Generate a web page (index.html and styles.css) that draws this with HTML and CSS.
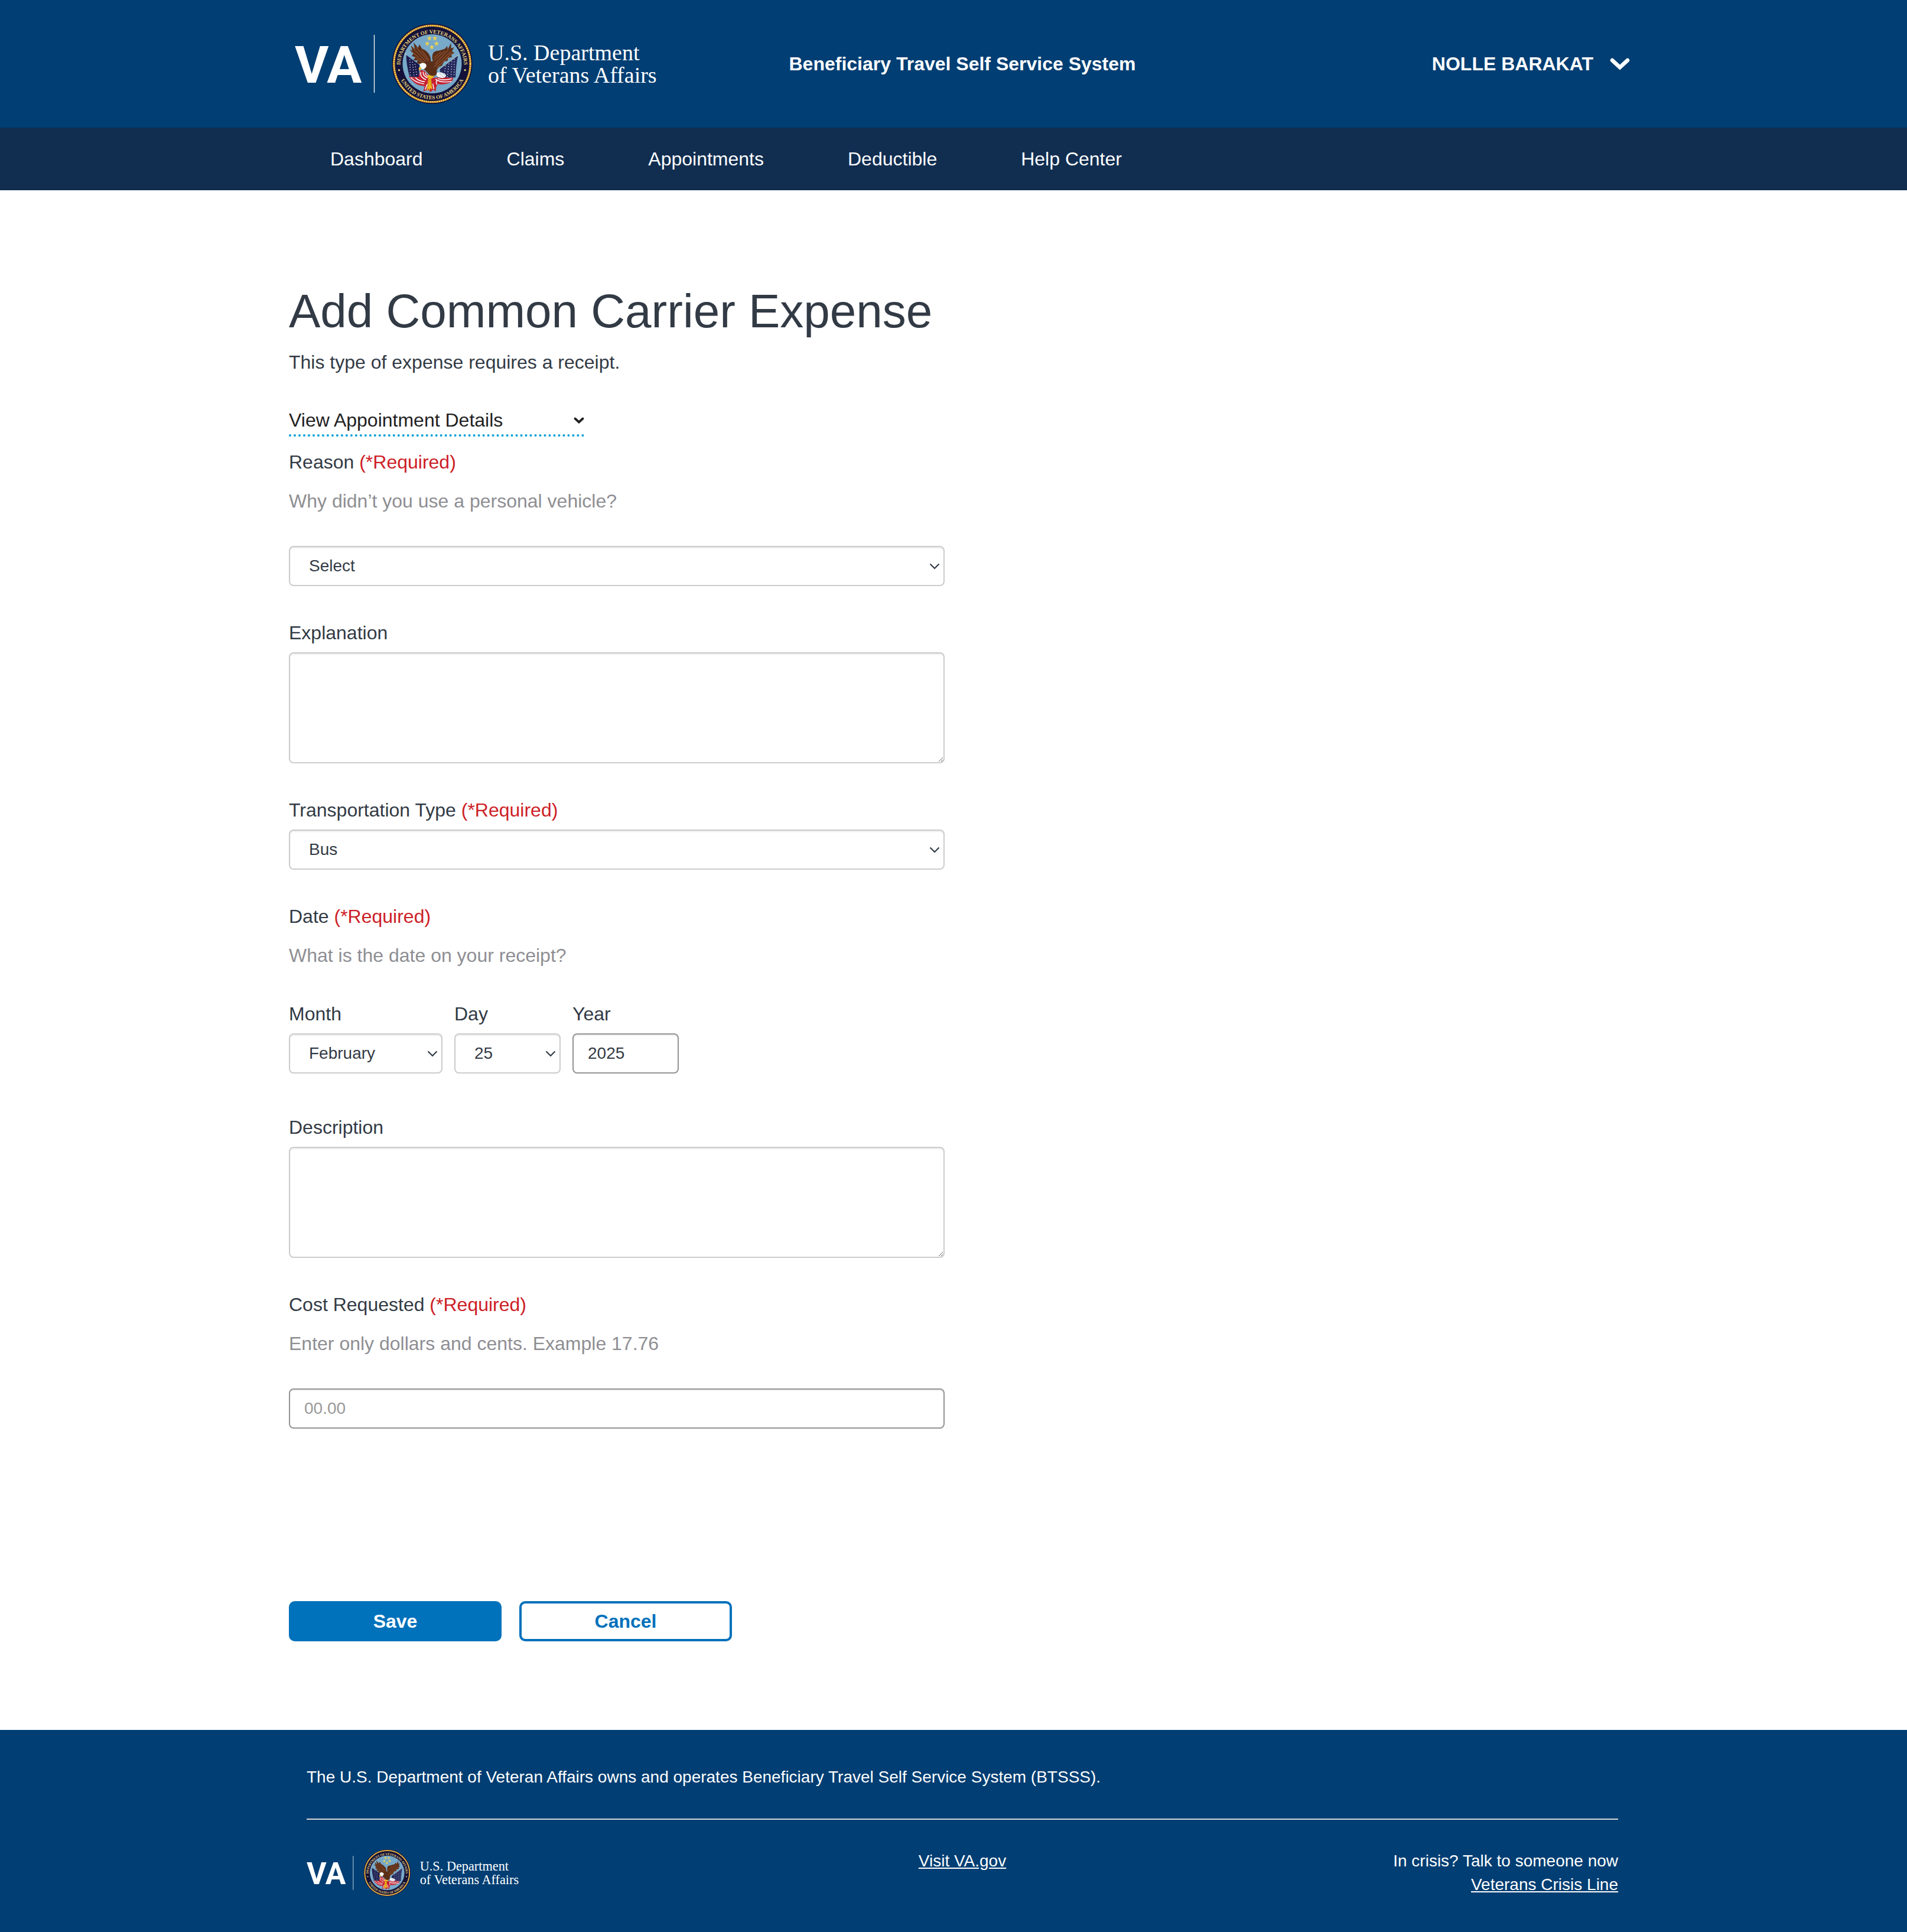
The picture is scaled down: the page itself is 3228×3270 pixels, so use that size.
FILE: index.html
```html
<!DOCTYPE html>
<html lang="en">
<head>
<meta charset="utf-8">
<meta name="viewport" content="width=device-width, initial-scale=1">
<title>Add Common Carrier Expense</title>
<link rel="stylesheet" href="styles.css">
</head>
<body>
<svg class="sprite" aria-hidden="true">
  <symbol id="chevron" viewBox="0 0 18 11"><path d="M1.500 1.500 9 9l7.500-7.500" fill="none" stroke="currentColor" stroke-width="2.200"/></symbol>
  <symbol id="chevron-bold" viewBox="0 0 18 11"><path d="M2.500 2.500 9 8.500l6.500-6" fill="none" stroke="currentColor" stroke-width="3.800" stroke-linecap="round"/></symbol>
  <defs>
    <path id="arc-top" d="M83 243a162 162 0 0 1 324 0"/>
    <path id="arc-bottom" d="M69 264a178 178 0 0 0 352 0"/>
    <path id="star" d="m231 92 3 9h10l-8 6 3 10-8-6-8 6 3-10-8-6h10z"/>
    <g id="seal">
      <circle cx="245" cy="235" r="204" fill="#14123a"/>
      <circle cx="245" cy="235" r="194" fill="none" stroke="#b3782a" stroke-width="10"/>
      <circle cx="245" cy="235" r="194" fill="none" stroke="#f6cf55" stroke-width="8" stroke-dasharray="7 4"/>
      <circle cx="245" cy="235" r="150" fill="#78a9c9"/>
      <g fill="#e6d27c"><circle cx="77" cy="267" r="5"/><circle cx="412" cy="267" r="5"/></g>
      <g fill="#f0d24a">
        <use href="#star"/><use href="#star" x="28"/><use href="#star" x="-11" y="27"/><use href="#star" x="36" y="27"/><use href="#star" x="12" y="45"/>
      </g>
      <path d="M109 182 152 300M379 190 275 268" stroke="#d9dcc0" stroke-width="3"/>
      <path d="M113 190 181 240 177 302 130 300Q114 240 113 190Z" fill="#1b1c4e"/>
      <path d="M376 194Q366 240 364 304L290 308 284 262Z" fill="#24285c"/>
      <path d="M132 212l2 90M145 225l8 74M158 236l9 60M345 222l-4 80M330 234l-8 70M313 244l-8 60M358 210l-2 90" stroke="#e8ecf5" stroke-width="4" stroke-dasharray="4 9"/>
      <path d="M126 299Q150 306 177 300L185 268Q205 262 222 290L246 306Q300 302 352 306L346 325Q310 345 275 338Q262 350 264 376L250 366 238 378 222 366 200 376 207 348Q160 350 126 299Z" fill="#c8202f"/>
      <path d="M136 303Q158 330 204 337M160 305Q178 324 208 326M188 276Q180 302 214 316M200 275Q196 296 222 306M212 280Q208 292 228 300M262 312Q285 334 344 324M274 310Q300 322 344 311M220 338 210 366M248 336 254 364M270 314Q262 332 270 340" fill="none" stroke="#f3f0f2" stroke-width="5"/>
      <path d="M129 161 145 169 137 142 157 160 150 126 174 154 180 136 193 158Q216 166 230 188 240 205 238 222L249 222Q240 194 252 178 263 168 279 168L309 159 322 144 324 162 341 129 341 157 356 151 346 171 358 180 343 188 345 201 326 205 323 220 306 222 295 244 278 252 268 267 270 286 251 302 235 296 218 276 194 254 184 236 166 231 172 218 150 217 160 202 141 195 150 184Z" fill="#5b2e18"/>
      <path d="M144 150 214 225M164 151 226 222M190 164 228 216M145 174 205 230M155 198 205 238M328 163 260 235M341 172 255 250M348 178 268 255M310 169 255 218M290 175 253 205M330 198 275 247" stroke="#8d5130" stroke-width="4"/>
      <path d="M181 238Q190 227 207 232 222 240 212 255 200 268 188 258Z" fill="#fff"/>
      <path d="M183 250Q172 256 180 270L192 258Z" fill="#efbf2d"/>
      <path d="M268 281Q290 272 316 291 318 301 300 308 280 306 268 295Z" fill="#f4f4f8"/>
      <path d="M282 280Q288 294 306 305M292 279Q300 288 314 295" fill="none" stroke="#aab5c8" stroke-width="3"/>
      <path d="M216 299l14-8 16 6 10-4-8 14-8 4 6 56-10-10-4 16-6-14-4 15-4-8 8-60z" fill="#efb81f"/>
      <path d="M231 309l-5 44M236 309l5 40" stroke="#a96d18" stroke-width="2"/>
    </g>
  </defs>
</svg>

<header class="site-header">
  <div class="container site-header__row">
    <a class="logo-link" href="#">
      <svg class="logo" viewBox="0 0 614 136" role="img" aria-label="VA, U.S. Department of Veterans Affairs">
        <text class="va-mark" x="0" y="100">VA</text>
        <path d="M134.500 19v98" stroke="#fff" stroke-width="1.300"/>
        <g transform="translate(232.500 68) scale(.3333) translate(-245 -235)">
          <use href="#seal"/>
          <text class="seal-text"><textPath href="#arc-top" startOffset="50%">DEPARTMENT OF VETERANS AFFAIRS</textPath></text>
          <text class="seal-text"><textPath href="#arc-bottom" startOffset="50%">UNITED STATES OF AMERICA</textPath></text>
        </g>
        <text class="va-name" x="327" y="62">U.S. Department</text>
        <text class="va-name" x="327" y="100">of Veterans Affairs</text>
      </svg>
    </a>
    <div class="site-title">Beneficiary Travel Self Service System</div>
    <button class="user-menu" type="button">NOLLE BARAKAT
      <svg class="user-menu__icon" viewBox="0 0 34 22" aria-hidden="true"><path d="M4 5 17 17 30 5" fill="none" stroke="currentColor" stroke-width="6.500" stroke-linecap="round"/></svg>
    </button>
  </div>
</header>
<nav class="main-nav">
  <div class="container main-nav__row">
    <a href="#">Dashboard</a>
    <a href="#">Claims</a>
    <a href="#">Appointments</a>
    <a href="#">Deductible</a>
    <a href="#">Help Center</a>
  </div>
</nav>

<main class="container main">
  <h1>Add Common Carrier Expense</h1>
  <p class="intro">This type of expense requires a receipt.</p>
  <form class="form">
    <div class="picker details">
      <select class="details__select" aria-label="Appointment details"><option>View Appointment Details</option></select>
      <svg class="picker__icon"><use href="#chevron-bold"/></svg>
    </div>

    <div class="field">
      <label for="reason">Reason <span class="required">(*Required)</span></label>
      <p class="help">Why didn’t you use a personal vehicle?</p>
      <div class="picker">
        <select class="control control--select" id="reason"><option>Select</option></select>
        <svg class="picker__icon"><use href="#chevron"/></svg>
      </div>
    </div>

    <div class="field">
      <label for="explanation">Explanation</label>
      <textarea class="control control--area" id="explanation"></textarea>
    </div>

    <div class="field">
      <label for="transport">Transportation Type <span class="required">(*Required)</span></label>
      <div class="picker">
        <select class="control control--select" id="transport"><option>Bus</option></select>
        <svg class="picker__icon"><use href="#chevron"/></svg>
      </div>
    </div>

    <fieldset class="field field--date">
      <legend>Date <span class="required">(*Required)</span></legend>
      <p class="help">What is the date on your receipt?</p>
      <div class="date">
        <div class="date__month">
          <label for="month">Month</label>
          <div class="picker">
            <select class="control control--select" id="month"><option>February</option></select>
            <svg class="picker__icon"><use href="#chevron"/></svg>
          </div>
        </div>
        <div class="date__part">
          <label for="day">Day</label>
          <div class="picker">
            <select class="control control--select" id="day"><option>25</option></select>
            <svg class="picker__icon"><use href="#chevron"/></svg>
          </div>
        </div>
        <div class="date__part">
          <label for="year">Year</label>
          <input class="control control--input" id="year" type="text" value="2025">
        </div>
      </div>
    </fieldset>

    <div class="field">
      <label for="description">Description</label>
      <textarea class="control control--area" id="description"></textarea>
    </div>

    <div class="field">
      <label for="cost">Cost Requested <span class="required">(*Required)</span></label>
      <p class="help">Enter only dollars and cents. Example 17.76</p>
      <input class="control control--input" id="cost" type="text" placeholder="00.00">
    </div>

    <div class="actions">
      <button class="btn btn--primary" type="submit">Save</button>
      <button class="btn" type="button">Cancel</button>
    </div>
  </form>
</main>

<footer class="site-footer">
  <div class="container">
    <div class="site-footer__inner">
      <p class="site-footer__note">The U.S. Department of Veteran Affairs owns and operates Beneficiary Travel Self Service System (BTSSS).</p>
      <div class="site-footer__row">
        <a class="logo-link" href="#">
          <svg class="logo logo--small" viewBox="0 0 614 136" role="img" aria-label="VA, U.S. Department of Veterans Affairs">
            <text class="va-mark" x="0" y="100">VA</text>
            <path d="M134.500 19v98" stroke="#fff" stroke-width="1.300"/>
            <g transform="translate(232.500 68) scale(.3333) translate(-245 -235)">
              <use href="#seal"/>
              <text class="seal-text"><textPath href="#arc-top" startOffset="50%">DEPARTMENT OF VETERANS AFFAIRS</textPath></text>
              <text class="seal-text"><textPath href="#arc-bottom" startOffset="50%">UNITED STATES OF AMERICA</textPath></text>
            </g>
            <text class="va-name" x="327" y="62">U.S. Department</text>
            <text class="va-name" x="327" y="100">of Veterans Affairs</text>
          </svg>
        </a>
        <a href="#">Visit VA.gov</a>
        <div class="crisis">In crisis? Talk to someone now<br><a href="#">Veterans Crisis Line</a></div>
      </div>
    </div>
  </div>
</footer>
</body>
</html>
```
FILE: styles.css
```css
* { box-sizing: border-box; }

body {
  margin: 0;
  background: #fff;
  color: #323a45;
  font: 32px/46px "Liberation Sans", Arial, sans-serif;
}

p, h1 { margin: 0; }
a { color: inherit; }
button, select, input, textarea { font: inherit; color: inherit; }

.sprite { display: block; width: 0; height: 0; }

.container {
  max-width: 2310px;
  margin: 0 auto;
  padding-left: 30px;
}

/* Logo */
.logo { display: block; width: 614px; height: 136px; overflow: visible; }
.logo--small { width: 360px; height: 80px; }
.logo-link { justify-self: start; }
.va-mark { font: bold 88px Roboto, sans-serif; fill: #fff; }
.va-name { font: 38px "Liberation Serif", serif; fill: #fff; }
.seal-text { font: bold 27px "Liberation Serif", serif; fill: #e6d27c; text-anchor: middle; }

/* Header */
.site-header { background: #003e73; color: #fff; padding: 40px 0; }
.site-header__row {
  display: grid;
  grid-template-columns: 1fr auto 1fr;
  align-items: center;
}
.site-header .logo-link { margin-left: 10px; }
.site-title { font-weight: bold; }
.user-menu {
  justify-self: end;
  display: flex;
  align-items: center;
  gap: 28px;
  margin-right: 10px;
  padding: 0;
  border: 0;
  background: none;
  font-weight: bold;
}
.user-menu__icon { width: 34px; height: 22px; }

.main-nav { background: #112e51; color: #fff; }
.main-nav__row { display: flex; gap: 142px; }
.main-nav a { padding: 30px 0; text-decoration: none; }
.main-nav a:first-child { margin-left: 70px; }

/* Form */
.main { padding-top: 161px; padding-bottom: 150px; }
h1 { margin-bottom: 19px; font-size: 80px; line-height: 88px; font-weight: normal; }
.intro { margin-bottom: 51px; }
.form { max-width: 1110px; }

.field { margin: 0 0 56px; padding: 0; border: 0; }
.field--date { margin-bottom: 68px; }
label, legend { display: block; padding: 0; margin-bottom: 10px; }
.required { color: #cd2026; }
.help { padding-top: 10px; margin-bottom: 53px; color: #8e8e93; }

.control {
  display: block;
  width: 100%;
  height: 68px;
  padding: 0 24px;
  border: 2px solid #ccc;
  border-radius: 8px;
  background: #fff;
  box-shadow: inset 0 2px 2px rgba(0, 0, 0, .075);
  font-size: 28px;
  line-height: 40px;
}
.control--select { appearance: none; padding: 0 40px 0 32px; }
.control--area { height: 188px; padding: 12px 24px; resize: both; }
.control--input { border-color: #949494; }
.control::placeholder { color: #999; opacity: 1; }

.picker { display: grid; align-items: center; }
.picker > * { grid-area: 1 / 1; }
.picker__icon {
  justify-self: end;
  width: 18px;
  height: 11px;
  margin-right: 8px;
  pointer-events: none;
}

.details { max-width: 500px; margin-bottom: 20px; color: #212121; }
.details__select {
  appearance: none;
  width: 100%;
  height: 52px;
  padding: 0;
  border: 0;
  border-bottom: 4px dotted #00a0d8;
  border-radius: 0;
  background: none;
}
.details .picker__icon { margin-right: 0; margin-bottom: 4px; }

.date { display: flex; gap: 20px; }
.date__month { flex: 0 1 260px; }
.date__part { flex: 0 1 180px; }

.actions { display: flex; gap: 30px; margin-top: 292px; }
.btn {
  width: 360px;
  height: 68px;
  padding: 0;
  border: 4px solid #0071bb;
  border-radius: 10px;
  background: #fff;
  color: #0071bb;
  font-weight: bold;
}
.btn--primary { background: #0071bb; color: #fff; }

/* Footer */
.site-footer {
  padding: 60px 0;
  background: #003e73;
  color: #fff;
  font-size: 28px;
  line-height: 40px;
}
.site-footer__inner { padding: 0 30px; }
.site-footer__note { padding-bottom: 50px; border-bottom: 2px solid #d6d7d9; }
.site-footer__row {
  display: grid;
  grid-template-columns: 1fr auto 1fr;
  align-items: start;
  padding-top: 50px;
}
.crisis { text-align: right; }
```
